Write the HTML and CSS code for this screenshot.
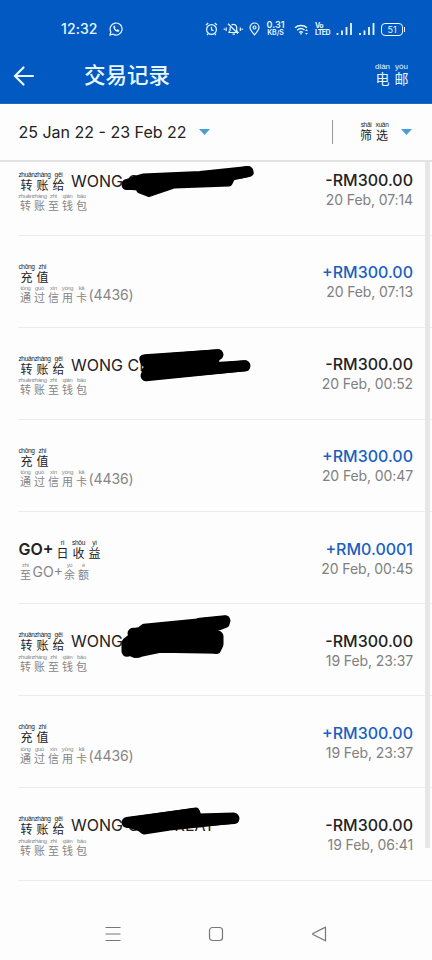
FILE: index.html
```html
<!DOCTYPE html>
<html lang="en">
<head>
<meta charset="utf-8">
<title>交易记录</title>
<link rel="stylesheet" href="styles.css">
</head>
<body>
<header class="top">
  <div class="status">
    <span class="clock">12:32</span>
    <svg class="whatsapp" width="14" height="14" viewBox="0 0 14 14"><path d="M1 13l.9-3A6 6 0 1 1 4.100 12.200z"/><path class="solid" d="M4.500 4l1.100-.5.9 1.800-.6.8c.4.9 1.100 1.500 2 1.900l.8-.7 1.700.9c0 1-.9 1.700-1.900 1.600C6.200 9.500 4.100 7 4.500 4z"/></svg>
    <svg class="icons" width="56" height="14" viewBox="0 0 56 14">
      <circle cx="6.500" cy="7.500" r="4.900"/><path d="M6.500 4.800v3l2 .8M1 3.200L3.200 1M12 3.200L9.800 1M3 12l-1 1M10 12l1 1"/>
      <path d="M23.500 10.500h9.500l-1.300-2V6.200A3.300 3.300 0 0 0 26.500 3M25.100 5.300v3.200l-1.600 2M27.500 12.200h2.500M23 1.800l10 9.700M21.200 5.500v3.500M19.300 6.400v1.500M35.300 5.500v3.500M37.200 6.400v1.500"/>
      <path d="M49.500 12.800C46.800 9.800 45 7.600 45 5.500a4.500 4.500 0 0 1 9 0c0 2.100-1.800 4.300-4.500 7.300z"/><circle cx="49.500" cy="5.500" r="1.500"/>
    </svg>
    <span class="speed"><b>0.31</b><b class="unit">KB/S</b></span>
    <svg class="wifi" width="15" height="13" viewBox="0 0 15 13"><path d="M1 4.700a9 9 0 0 1 12 0M3.200 7.200a5.700 5.700 0 0 1 7.300-.2M5.200 9.500a2.800 2.800 0 0 1 3.600 0"/><path class="solid" d="M5.700 10.300h2.600L7 12zM11 8l1.500-1.700L14 8zM11 10l1.500 1.700L14 10z"/></svg>
    <span class="lte"><b>Vo</b><b>LTE<i>D</i></b></span>
    <svg class="signals" width="39" height="13" viewBox="0 0 39 13"><path d="M1.500 12v-2M6 12V7.500M10.500 12V4M15 12V0M24 12v-2M28.500 12V7.500M33 12V4M37.500 12V0"/></svg>
    <span class="battery">51</span>
  </div>
  <div class="appbar">
    <svg class="back" width="22" height="22" viewBox="0 0 22 22"><path d="M20 11H2.500M10.500 2.500L2 11l8.500 8.500"/></svg>
    <h1>交易记录</h1>
    <span class="email"><span class="hz"><i>diàn</i>电</span><span class="hz"><i>yóu</i>邮</span></span>
  </div>
</header>
<div class="filters">
  <span class="range">25 Jan 22 - 23 Feb 22</span><span class="caret"></span>
  <span class="rule"></span>
  <span class="choose"><span class="hz"><i>shāi</i>筛</span><span class="hz"><i>xuǎn</i>选</span></span><span class="caret"></span>
</div>
<main class="list">
  <article class="row">
    <div class="info">
      <div class="title"><span class="hz"><i>zhuǎn</i>转</span><span class="hz"><i>zhàng</i>账</span><span class="hz"><i>gěi</i>给</span><span class="name">WONG C</span></div>
      <div class="sub"><span class="hz"><i>zhuǎn</i>转</span><span class="hz"><i>zhàng</i>账</span><span class="hz"><i>zhì</i>至</span><span class="hz"><i>qián</i>钱</span><span class="hz"><i>bāo</i>包</span></div>
    </div>
    <div class="value"><b>-RM300.00</b><time>20 Feb, 07:14</time></div>
    <svg class="mark" width="260" height="60" viewBox="0 143 260 60"><path d="M126 183L136 179L143 177L200 174.500L248 169.500L250 173L232 177L229 183L174 185L149 193.500L140 190L138 187L126 186z"/><path class="end" d="M127 184.500h5M238 173.500L248 171.500"/></svg>
  </article>
  <article class="row">
    <div class="info">
      <div class="title"><span class="hz"><i>chōng</i>充</span><span class="hz"><i>zhí</i>值</span></div>
      <div class="sub"><span class="hz"><i>tōng</i>通</span><span class="hz"><i>guò</i>过</span><span class="hz"><i>xìn</i>信</span><span class="hz"><i>yòng</i>用</span><span class="hz"><i>kǎ</i>卡</span><span>(4436)</span></div>
    </div>
    <div class="value plus"><b>+RM300.00</b><time>20 Feb, 07:13</time></div>
  </article>
  <article class="row">
    <div class="info">
      <div class="title"><span class="hz"><i>zhuǎn</i>转</span><span class="hz"><i>zhàng</i>账</span><span class="hz"><i>gěi</i>给</span><span class="name">WONG CH</span></div>
      <div class="sub"><span class="hz"><i>zhuǎn</i>转</span><span class="hz"><i>zhàng</i>账</span><span class="hz"><i>zhì</i>至</span><span class="hz"><i>qián</i>钱</span><span class="hz"><i>bāo</i>包</span></div>
    </div>
    <div class="value"><b>-RM300.00</b><time>20 Feb, 00:52</time></div>
    <svg class="mark" width="260" height="60" viewBox="0 327.300 260 60"><path d="M143 359L218 353L216 360L212 366L245 364L246 368L146 377L145 371L149 367L144 363z"/><path class="end" d="M145 360L218 355M146 376L245 366"/></svg>
  </article>
  <article class="row">
    <div class="info">
      <div class="title"><span class="hz"><i>chōng</i>充</span><span class="hz"><i>zhí</i>值</span></div>
      <div class="sub"><span class="hz"><i>tōng</i>通</span><span class="hz"><i>guò</i>过</span><span class="hz"><i>xìn</i>信</span><span class="hz"><i>yòng</i>用</span><span class="hz"><i>kǎ</i>卡</span><span>(4436)</span></div>
    </div>
    <div class="value plus"><b>+RM300.00</b><time>20 Feb, 00:47</time></div>
  </article>
  <article class="row">
    <div class="info">
      <div class="title"><span class="go">GO+</span><span class="hz"><i>rì</i>日</span><span class="hz"><i>shōu</i>收</span><span class="hz"><i>yì</i>益</span></div>
      <div class="sub"><span class="hz"><i>zhì</i>至</span><span class="go">GO+</span><span class="hz"><i>yú</i>余</span><span class="hz"><i>é</i>额</span></div>
    </div>
    <div class="value plus"><b>+RM0.0001</b><time>20 Feb, 00:45</time></div>
  </article>
  <article class="row">
    <div class="info">
      <div class="title"><span class="hz"><i>zhuǎn</i>转</span><span class="hz"><i>zhàng</i>账</span><span class="hz"><i>gěi</i>给</span><span class="name">WONG</span></div>
      <div class="sub"><span class="hz"><i>zhuǎn</i>转</span><span class="hz"><i>zhàng</i>账</span><span class="hz"><i>zhì</i>至</span><span class="hz"><i>qián</i>钱</span><span class="hz"><i>bāo</i>包</span></div>
    </div>
    <div class="value"><b>-RM300.00</b><time>19 Feb, 23:37</time></div>
    <svg class="mark" width="260" height="60" viewBox="0 603.700 260 60"><path d="M133 632L140 630L144 627L226 619L226 624L207 631L204 635L218 634L217 650L160 649L136 654L126 651L126 641L131 637z"/><path class="end" d="M133 633h4M200 623L225 620.500M218 636v8L216 648M127 651v-8M135 652h3"/></svg>
  </article>
  <article class="row">
    <div class="info">
      <div class="title"><span class="hz"><i>chōng</i>充</span><span class="hz"><i>zhí</i>值</span></div>
      <div class="sub"><span class="hz"><i>tōng</i>通</span><span class="hz"><i>guò</i>过</span><span class="hz"><i>xìn</i>信</span><span class="hz"><i>yòng</i>用</span><span class="hz"><i>kǎ</i>卡</span><span>(4436)</span></div>
    </div>
    <div class="value plus"><b>+RM300.00</b><time>19 Feb, 23:37</time></div>
  </article>
  <article class="row">
    <div class="info">
      <div class="title"><span class="hz"><i>zhuǎn</i>转</span><span class="hz"><i>zhàng</i>账</span><span class="hz"><i>gěi</i>给</span><span class="name">WONG C</span><span class="last">KEAT</span></div>
      <div class="sub"><span class="hz"><i>zhuǎn</i>转</span><span class="hz"><i>zhàng</i>账</span><span class="hz"><i>zhì</i>至</span><span class="hz"><i>qián</i>钱</span><span class="hz"><i>bāo</i>包</span></div>
    </div>
    <div class="value"><b>-RM300.00</b><time>19 Feb, 06:41</time></div>
    <svg class="mark" width="260" height="60" viewBox="0 788 260 60"><path d="M127 821L196 811L198 817L234 816L235 820L170 827L144 831L140 828L128 824z"/><path class="end" d="M127 822.500L195 813.500M175 823L234 818.500"/></svg>
  </article>
  <div class="scrollbar"></div>
</main>
<nav class="nav">
  <svg width="16" height="16" viewBox="0 0 16 16"><path d="M.5 1.500h15M.5 8h15M.5 14.500h15"/></svg>
  <svg width="16" height="16" viewBox="0 0 16 16"><rect x="1.500" y="1.500" width="13" height="13" rx="3"/></svg>
  <svg width="16" height="16" viewBox="0 0 16 16"><path d="M14.500 1.300v13.400L2 8.600q-.8-.6 0-1.200L13.500 1.600z"/></svg>
</nav>
</body>
</html>
```
FILE: styles.css
```css
* { box-sizing: border-box; }
body {
  margin: 0;
  width: 432px;
  height: 960px;
  overflow: hidden;
  display: flex;
  flex-direction: column;
  background: #fdfdfd;
  color: #222;
  font-family: Inter, "Noto Sans CJK SC", sans-serif;
}
svg { fill: none; stroke: currentColor; stroke-width: 1.2; flex: none; display: block; }
.solid { fill: currentColor; stroke: none; }

.top {
  height: 104px;
  flex: none;
  background: #0259c2;
  border-bottom: 1px solid #2668b4;
  color: #e8f8ff;
}
.status { height: 48px; padding: 10px 0 0 61px; display: flex; align-items: center; }
.clock { width: 48px; font: 500 14px/20px Inter, sans-serif; letter-spacing: .1px; }
.icons { margin-left: 82px; }
.speed { width: 19px; margin-left: 5px; display: flex; flex-direction: column; align-items: center; font-size: 9px; line-height: 8px; }
.speed b { font-weight: 600; }
.speed .unit { font-size: 7px; line-height: 8px; }
.wifi { margin-left: 9px; stroke-width: 1.5; }
.lte { width: 15px; margin-left: 6px; display: flex; flex-direction: column; font-size: 7px; line-height: 7px; letter-spacing: -.6px; }
.lte i { font-style: normal; }
.signals { margin-left: 6px; stroke-width: 1.8; }
.battery {
  position: relative;
  width: 22px;
  height: 13px;
  margin-left: 6px;
  border: 1px solid currentColor;
  border-radius: 4px;
  font-size: 9px;
  line-height: 11px;
  text-align: center;
}
.battery::after { content: ""; position: absolute; right: -3px; top: 3px; width: 1.500px; height: 5px; background: currentColor; }
.appbar { height: 55px; padding: 0 21px 0 13px; display: flex; align-items: center; }
.back { stroke-width: 2.2; stroke-linecap: round; }
h1 { flex: 1; margin: -3px 0 0 49px; font: 500 21.500px/30px "Noto Sans CJK SC", sans-serif; }

.hz {
  width: 16px;
  display: inline-flex;
  flex-direction: column;
  align-items: center;
  flex: none;
  white-space: nowrap;
  font: 400 12px/12px "Noto Sans CJK SC", sans-serif;
}
.hz i { font: normal 400 6.500px/6px "Liberation Sans", sans-serif; letter-spacing: -.3px; margin-bottom: 1px; }
.email { display: flex; margin-top: -3px; }
.email .hz { width: 19px; font-size: 14px; line-height: 14px; }
.email .hz i { font-size: 8px; line-height: 7px; letter-spacing: 0; }

.filters {
  position: relative;
  z-index: 1;
  height: 58px;
  flex: none;
  padding: 0 20px 0 18.500px;
  display: flex;
  align-items: center;
  background: #fdfdfd;
  border-bottom: 2px solid #e2e2e2;
}
.range { width: 180.500px; font-size: 16px; line-height: 20px; white-space: nowrap; }
.caret { width: 11px; height: 6px; background: #4a9ed4; clip-path: polygon(0 0, 100% 0, 50% 100%); }
.rule { width: 1px; height: 24px; margin-left: 122px; background: #999; }
.choose { display: flex; margin: -2px 11px 0 25px; }

.list { position: relative; height: 738px; flex: none; margin-top: -18.500px; }
.row {
  position: relative;
  height: 92.150px;
  margin-left: 18px;
  padding-right: 19px;
  display: flex;
  justify-content: space-between;
  border-bottom: 1px solid #ececec;
}
.info { padding: 27px 0 0 .5px; }
.title, .sub { display: flex; align-items: flex-end; white-space: nowrap; }
.title { height: 20px; font-size: 16px; line-height: 20px; }
.sub { height: 17px; margin-top: 3.500px; font-size: 14px; line-height: 17px; color: #858585; }
.sub .hz { width: 14px; font-size: 11px; line-height: 11px; }
.sub .hz i { font-size: 5.800px; line-height: 5px; letter-spacing: -.3px; }
.sub > span:last-child:not(.hz) { letter-spacing: -.1px; }
.name { margin-left: 4.500px; }
.last { margin-left: 35px; }
.title .go { width: 36px; font-weight: 600; }
.sub .go { width: 30px; }
.value { padding-top: 26.500px; display: flex; flex-direction: column; align-items: flex-end; }
.value b { font-size: 16px; line-height: 20px; font-weight: 500; }
.value time { font-size: 14px; line-height: 20px; color: #808080; letter-spacing: -.1px; }
.plus b { color: #1b5fbf; }
.mark { position: absolute; left: -18px; top: -.5px; fill: #000; stroke: #000; stroke-width: 7px; stroke-linejoin: round; }
.mark .end { stroke-width: 11px; stroke-linecap: round; }
.scrollbar { position: absolute; right: 2px; top: 0; width: 5px; height: 704px; background: #e6e6e6; }
.nav { flex: 1; padding: 44px 105px 0; display: flex; justify-content: space-between; color: #777; }
```
